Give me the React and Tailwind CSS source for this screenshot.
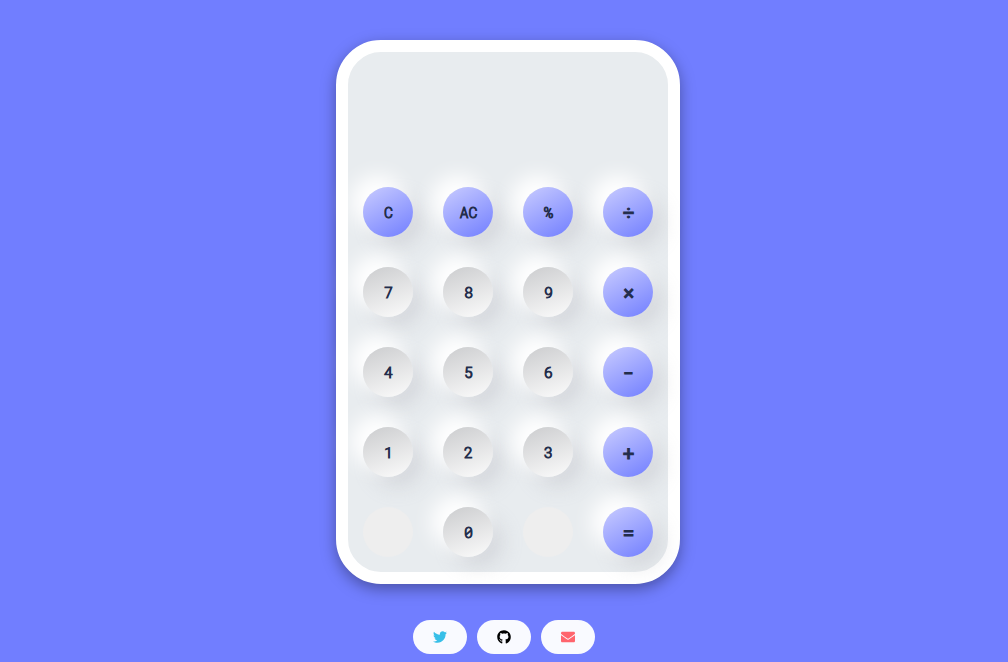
import { useState } from "react";
import { FaTwitter, FaGithub, FaEnvelope } from "react-icons/fa";

const keys = [
  { label: "C", kind: "word" },
  { label: "AC", kind: "word" },
  { label: "%", kind: "word" },
  { label: "÷", kind: "operator" },
  { label: "7" },
  { label: "8" },
  { label: "9" },
  { label: "×", kind: "operator" },
  { label: "4" },
  { label: "5" },
  { label: "6" },
  { label: "-", kind: "operator" },
  { label: "1" },
  { label: "2" },
  { label: "3" },
  { label: "+", kind: "operator" },
  { label: "", name: "Unused left" },
  { label: "0" },
  { label: "", name: "Unused right" },
  { label: "=", kind: "operator" },
];

const raised = "shadow-[-10px_-10px_20px_2px_#ffffff,10px_10px_20px_rgba(170,170,178,0.3)]";
const violet = "bg-linear-[150deg,#c9ccff,#717eff] text-[#232d4b]";
const heavy = "[-webkit-text-stroke:1px_#232d4b]";

const styles = {
  word: `${raised} ${violet} ${heavy} font-light text-[15px]`,
  operator: `${raised} ${violet} ${heavy} font-normal text-xl`,
  digit: `${raised} ${heavy} font-light bg-linear-[160deg,#cbccce,#fcfcfc] text-[#232d4b] text-[15px]`,
  empty: "bg-[#eeeeee]",
};

const links = [
  { name: "Twitter", href: "#twitter", Icon: FaTwitter, color: "text-[#38bfe8]" },
  { name: "GitHub", href: "#github", Icon: FaGithub, color: "text-black" },
  { name: "Email", href: "#email", Icon: FaEnvelope, color: "text-[#ff646d]" },
];

function Key({ item, onPress }) {
  const kind = item.label ? item.kind || "digit" : "empty";
  return (
    <button
      type="button"
      aria-label={item.name || item.label}
      onClick={() => onPress(item.label)}
      className={`flex size-[50px] items-center justify-center rounded-full pl-px ${styles[kind]}`}
    >
      {item.label}
    </button>
  );
}

function compute(text) {
  const parts = text.replace(/%/g, "÷100").match(/[0-9.]+|[-+×÷]/g) || [];
  const terms = [];
  let op = "+";
  for (const part of parts) {
    if (/[-+×÷]/.test(part)) {
      op = part;
      continue;
    }
    const n = Number(part);
    if (op === "+") terms.push(n);
    else if (op === "-") terms.push(-n);
    else if (op === "×") terms.push((terms.pop() || 0) * n);
    else terms.push((terms.pop() || 0) / n);
  }
  return String(terms.reduce((a, b) => a + b, 0));
}

export default function App() {
  const [entry, setEntry] = useState("");

  const press = (label) => {
    if (label === "AC") setEntry("");
    else if (label === "C") setEntry(entry.slice(0, -1));
    else if (label === "=") setEntry(entry ? compute(entry) : "");
    else setEntry(entry + label);
  };

  return (
    <div className="flex min-h-screen flex-col items-center bg-[#717eff] pt-10 pb-2 font-['Roboto_Mono',Roboto,monospace]">
      <main className="ml-2 rounded-[45px] border-12 border-white bg-[#e8ecef] shadow-[0_5px_15px_rgba(0,0,0,0.35)]">
        <output className="flex h-[120px] items-end justify-end overflow-hidden px-6 pb-4 text-3xl text-[#232d4b]">
          {entry}
        </output>
        <div className="grid grid-cols-4 gap-[30px] p-[15px]">
          {keys.map((item, i) => (
            <Key key={i} item={item} onPress={press} />
          ))}
        </div>
      </main>
      <nav aria-label="Contact" className="mt-9 flex gap-2.5">
        {links.map(({ name, href, Icon, color }) => (
          <a
            key={name}
            href={href}
            aria-label={name}
            className="flex items-center rounded-full bg-[#f9faff] px-5 py-2.5"
          >
            <Icon className={`size-3.5 ${color}`} />
          </a>
        ))}
      </nav>
    </div>
  );
}
